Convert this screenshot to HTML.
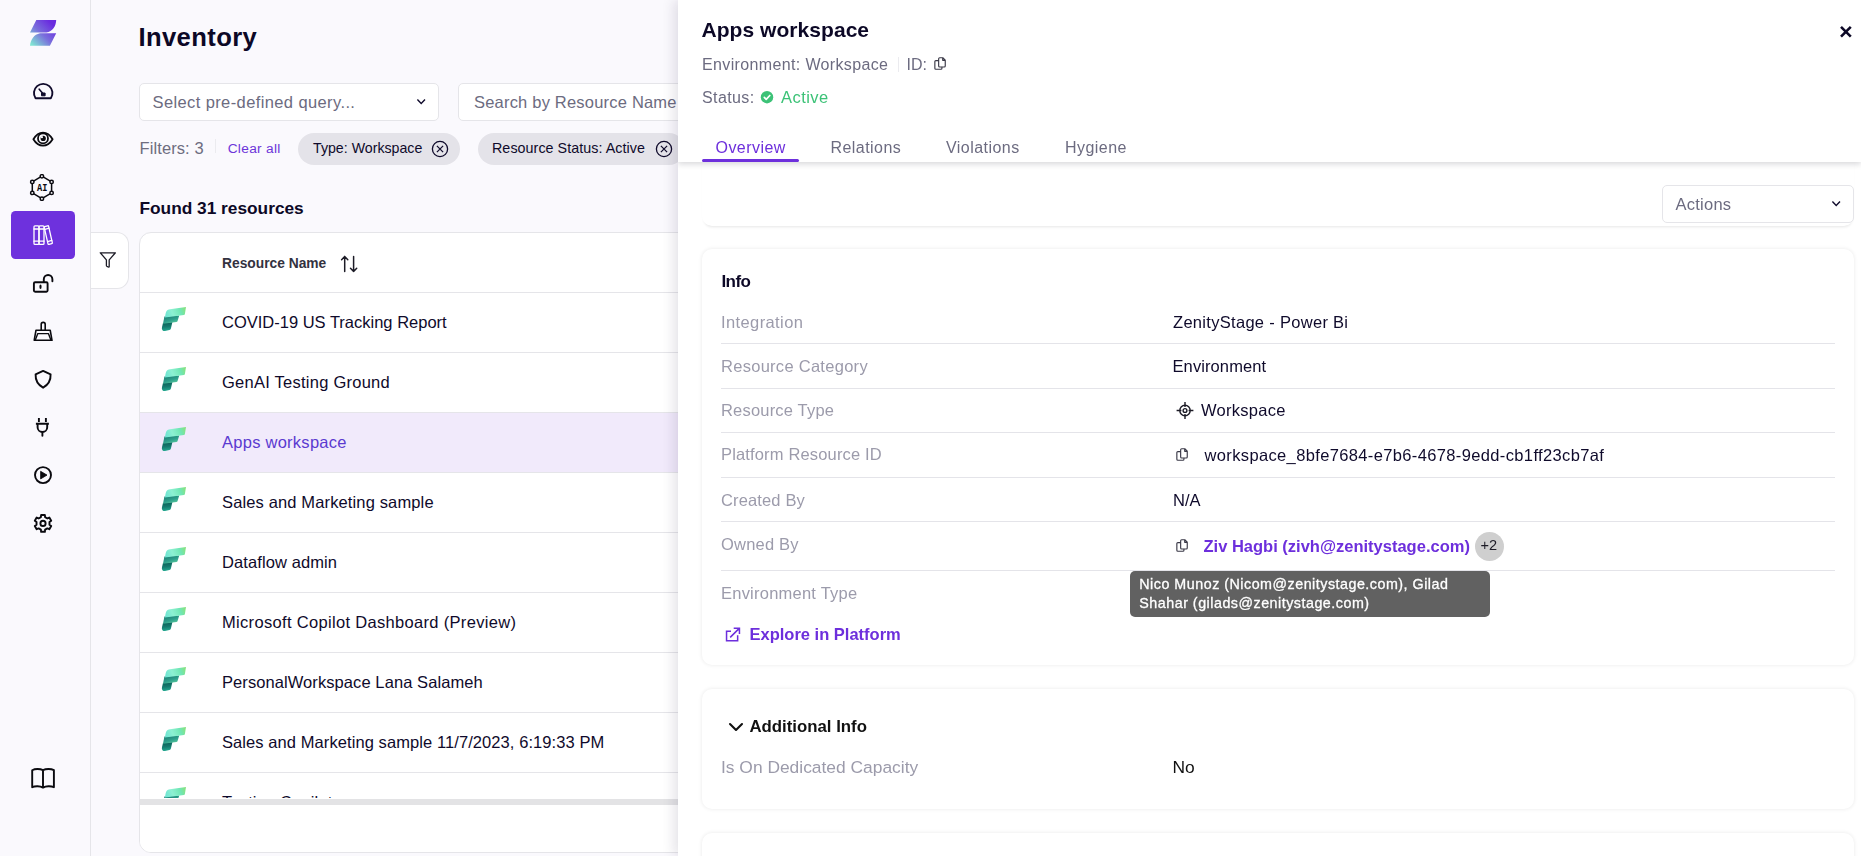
<!DOCTYPE html>
<html lang="en">
<head>
<meta charset="utf-8">
<title>Inventory</title>
<style>
*{box-sizing:border-box;margin:0;padding:0}
html,body{width:1861px;height:856px;overflow:hidden}
body{font-family:"Liberation Sans",sans-serif;background:#faf9fd;color:#0f0a2b;position:relative;font-size:16.5px}
.abs{position:absolute}
.t{position:absolute;white-space:nowrap;line-height:1}
svg{display:block}
/* sidebar */
#side{position:absolute;left:0;top:0;width:91px;height:856px;background:#faf9fd;border-right:1px solid #e5e5e9}
.ic{position:absolute;left:31px;width:24px;height:24px}
#active{position:absolute;left:11px;top:211px;width:64px;height:48px;background:#6e31dd;border-radius:4.5px}
/* main */
#main{position:absolute;left:91px;top:0;width:600px;height:856px;overflow:hidden}
#fbtn{position:absolute;left:91px;top:232px;width:38px;height:57px;background:#fff;border:1px solid #e5e5e9;border-left:none;border-radius:0 12px 12px 0}
.inp{position:absolute;height:38px;background:#fff;border:1px solid #e5e5e9;border-radius:5px}
.chip{position:absolute;top:133px;height:32px;background:#e4e3e9;border-radius:17px}
#tbl{position:absolute;left:139px;top:232px;width:700px;height:621px;background:#fff;border:1px solid #e5e5e9;border-radius:12px;overflow:hidden}
.row{position:absolute;left:0;width:700px;height:60px;border-top:1px solid #e5e5e9}
.row .nm{position:absolute;left:82px;top:21px;white-space:nowrap;line-height:1;font-size:16.5px;color:#0f0a2b}
.row svg{position:absolute;left:21px;top:13px}
.row.sel{background:#f1eafb}
.row.sel .nm{color:#5b3ad0}
/* panel */
#panel{will-change:transform;position:absolute;left:678px;top:0;width:1183px;height:856px;background:#fff;box-shadow:-4px 0 12px rgba(30,20,60,.12);overflow:hidden}
#phead{position:absolute;left:0;top:0;width:1183px;height:162px;background:#fff;box-shadow:0 2px 6px rgba(10,10,30,.17)}
.card{position:absolute;left:24px;width:1152px;background:#fff;border-radius:10px;box-shadow:0 0 4px rgba(0,0,0,.09)}
.lbl{position:absolute;left:43px;white-space:nowrap;line-height:1;font-size:16.5px;color:#9c9bab}
.val{position:absolute;left:495px;white-space:nowrap;line-height:1;font-size:16.5px;color:#0f0a2b}
.hr{position:absolute;left:43px;width:1114px;height:1px;background:#e4e4e9}
</style>
</head>
<body>
<svg width="0" height="0" style="position:absolute"><defs>
<linearGradient id="fg1" x1="0" y1="0.6" x2="1" y2="0.4"><stop offset="0" stop-color="#6fe5d2"/><stop offset="0.35" stop-color="#8df0d2"/><stop offset="0.75" stop-color="#6fe6b4"/><stop offset="1" stop-color="#86e283"/></linearGradient>
<linearGradient id="fg2" x1="0.1" y1="0" x2="0.7" y2="1"><stop offset="0" stop-color="#15776e"/><stop offset="0.6" stop-color="#2fa08c"/><stop offset="1" stop-color="#5ccf9f"/></linearGradient>
<linearGradient id="fg3" x1="0.4" y1="0" x2="0.5" y2="1"><stop offset="0" stop-color="#0b5f58"/><stop offset="0.5" stop-color="#147a6e"/><stop offset="1" stop-color="#25ab92"/></linearGradient>
<g id="fab">
<path d="M9 24C8.2 27.5 7.6 29 8 30.2C8.5 31.8 9.6 32.2 11 32L15.4 31C16.3 30.7 16.7 30.2 16.9 29.4L18.4 23Z" fill="url(#fg3)"/>
<path d="M10.4 17.4L25.2 16.4L23.6 22C23.4 22.6 23 22.9 22.4 23L9 24.7Z" fill="url(#fg2)"/>
<path d="M11 18.5C11.4 15 11.8 13.2 12.6 12C13.4 10.8 14.6 10.4 16 10.2L32 8L30.9 15C30.8 15.6 30.4 15.9 29.8 16Z" fill="url(#fg1)"/>
</g>
<g id="cpy" fill="none" stroke-width="1.15" stroke-linejoin="round" stroke-linecap="round"><path d="M6.65 1.75H9.8L12.25 4.2V9.95Q12.25 10.95 11.25 10.95H6.65Q5.65 10.95 5.65 9.95V2.75Q5.65 1.75 6.65 1.75ZM9.7 2V4.3H12"/><path d="M5.4 4.55H2.85Q1.85 4.55 1.85 5.55V12.25Q1.85 13.25 2.85 13.25H7.95Q8.95 13.25 8.95 12.25V11.2"/></g>
</defs></svg>
<!-- SIDEBAR -->
<div id="side">
  <svg class="abs" style="left:30px;top:20px" width="27" height="26" viewBox="0 0 27 26">
    <defs><linearGradient id="zg" x1="0.95" y1="0.05" x2="0.05" y2="0.95"><stop offset="0.12" stop-color="#6a2cdf"/><stop offset="0.55" stop-color="#7a6fdc"/><stop offset="1" stop-color="#80e6d3"/></linearGradient></defs>
    <path d="M6.3 0H26.2C26 6.5 22.5 11.5 16.4 12.6H0Z M10 13.2H26.2L19.9 25.8H0C0.6 19.5 4 14.4 10 13.2Z" fill="url(#zg)"/>
  </svg>
  <!-- gauge -->
  <svg class="abs" style="left:31px;top:79px" width="24" height="24" viewBox="0 0 24 24" fill="none" stroke="#0f0a2b" stroke-width="1.9" stroke-linejoin="round" stroke-linecap="round">
    <path d="M4.55 19.3A9.25 9.25 0 1 1 19.85 19.3Z"/><path d="M8.2 10.2L12.3 15" stroke-width="1.6"/><rect x="10.9" y="14" width="3.2" height="2.8" fill="#0f0a2b" stroke-width="1"/>
  </svg>
  <!-- eye -->
  <svg class="abs" style="left:31px;top:127px" width="24" height="24" viewBox="0 0 24 24" fill="none" stroke="#0a0a0f" stroke-width="1.8" stroke-linejoin="round">
    <path d="M2.4 12.3C5 7.8 8.4 5.6 12 5.6S19 7.8 21.6 12.3C19 16.6 15.6 18.7 12 18.7S5 16.6 2.4 12.3Z"/><circle cx="12" cy="11.4" r="5"/><circle cx="12.2" cy="11.4" r="2.6" fill="#0a0a0f" stroke="none"/><circle cx="10.9" cy="10.2" r="1.1" fill="#faf9fd" stroke="none"/>
  </svg>
  <!-- AI hex -->
  <svg class="abs" style="left:29px;top:174px" width="26" height="27" viewBox="0 0 26 27" fill="none" stroke="#0a0a0f" stroke-width="1.5">
    <path d="M12.9 2.2L22.6 7.9V18.9L12.9 24.7L3.3 18.9V7.9Z"/>
    <g fill="#faf9fd"><circle cx="12.9" cy="2.3" r="1.7"/><circle cx="22.6" cy="7.9" r="1.7"/><circle cx="22.6" cy="18.9" r="1.7"/><circle cx="12.9" cy="24.7" r="1.7"/><circle cx="3.3" cy="18.9" r="1.7"/><circle cx="3.3" cy="7.9" r="1.7"/></g>
    <text x="8" y="16.6" textLength="10.4" lengthAdjust="spacingAndGlyphs" font-family="Liberation Mono, monospace" font-weight="700" font-size="10" fill="#0a0a0f" stroke="none">AI</text>
  </svg>
  <div id="active"></div>
  <!-- books -->
  <svg class="abs" style="left:31px;top:223px" width="24" height="24" viewBox="0 0 24 24" fill="none" stroke="#fff" stroke-width="1.3" stroke-linejoin="round" stroke-linecap="round">
    <rect x="3" y="2.8" width="5" height="18.6" rx="1"/><rect x="8" y="2.8" width="5" height="18.6" rx="1"/><path d="M3 6H13M3 18.2H13"/>
    <path d="M13.6 3.6L16.6 2.8Q17.4 2.6 17.6 3.4L21.3 19.6Q21.5 20.4 20.7 20.6L18 21.4Q17.2 21.6 17 20.8L13.3 4.6Q13.1 3.8 13.6 3.6Z"/><path d="M14 6.3L18 5.2M16.7 18.6L20.8 17.4"/>
  </svg>
  <!-- unlock -->
  <svg class="abs" style="left:31px;top:271px" width="24" height="24" viewBox="0 0 24 24" fill="none" stroke="#0a0a0f" stroke-width="1.9" stroke-linejoin="round" stroke-linecap="round">
    <rect x="2.9" y="11.2" width="13.7" height="9.6" rx="1.2"/><path d="M12.8 11V8.3A4.3 4.3 0 0 1 21.4 8.3V10.3"/><ellipse cx="9.5" cy="15.7" rx="0.5" ry="1.6" stroke-width="1.2"/>
  </svg>
  <!-- dustpan -->
  <svg class="abs" style="left:31px;top:319px" width="24" height="24" viewBox="0 0 24 24" fill="none" stroke="#0a0a0f" stroke-width="1.6" stroke-linejoin="round" stroke-linecap="round">
    <path d="M10.2 11V5.4A2 2 0 0 1 14.2 5.4V11"/><path d="M5 11.2H19.2L21 21.3H3.2Z"/><path d="M4.4 20.8L6.8 14.6H17.4L19.8 20.8" stroke-width="1.4"/>
  </svg>
  <!-- shield -->
  <svg class="abs" style="left:31px;top:367px" width="24" height="24" viewBox="0 0 24 24" fill="none" stroke="#0a0a0f" stroke-width="1.9" stroke-linejoin="round">
    <path d="M12.1 3.9L19.6 7.3C19.9 13.3 17.2 17.8 12.1 20.7C7 17.8 4.3 13.3 4.6 7.3Z"/>
  </svg>
  <!-- plug -->
  <svg class="abs" style="left:31px;top:415px" width="24" height="24" viewBox="0 0 24 24" fill="none" stroke="#0a0a0f" stroke-width="1.9" stroke-linecap="butt">
    <path d="M7.9 3V6.9M14.9 3V6.9M4.9 8.8H17.9"/><path d="M6.6 9V12.2A4.8 4.8 0 0 0 16.2 12.2V9"/><path d="M11.4 17V20.7" stroke-linecap="round"/>
  </svg>
  <!-- play -->
  <svg class="abs" style="left:31px;top:463px" width="24" height="24" viewBox="0 0 24 24" fill="none" stroke="#0a0a0f" stroke-width="1.9">
    <circle cx="12" cy="12.1" r="8"/><path d="M9.6 8.3V15.9L16 12.1Z" fill="#0a0a0f" stroke-width="0.8" stroke-linejoin="round"/>
  </svg>
  <!-- gear -->
  <svg class="abs" style="left:31px;top:511px" width="24" height="24" viewBox="-12 -12.4 24 24" fill="none" stroke="#0a0a0f" stroke-width="1.9" stroke-linejoin="round">
    <path d="M-2.11 -6.26L-1.88 -8.39L1.88 -8.39L2.11 -6.26L4.36 -4.95L6.33 -5.82L8.21 -2.57L6.47 -1.30L6.47 1.30L8.21 2.57L6.33 5.82L4.36 4.95L2.11 6.26L1.88 8.39L-1.88 8.39L-2.11 6.26L-4.36 4.95L-6.33 5.82L-8.21 2.57L-6.47 1.30L-6.47 -1.30L-8.21 -2.57L-6.33 -5.82L-4.36 -4.95Z"/><circle cx="0" cy="0" r="2.6"/>
  </svg>
  <!-- book -->
  <svg class="abs" style="left:30px;top:766px" width="26" height="26" viewBox="0 0 26 26" fill="none" stroke="#0a0a0f" stroke-width="1.9" stroke-linejoin="round" stroke-linecap="round">
    <path d="M13 4.2C10 2.6 5 2.6 2.2 4.2V21.2C5 19.8 10 19.8 13 21.6C16 19.8 21 19.8 23.9 21.2V4.2C21 2.6 16 2.6 13 4.2ZM13 4.2V21.6"/>
  </svg>
</div>
<!-- MAIN -->
<div id="main">
  <div class="t" style="left:47.5px;top:25px;font-size:25.6px;font-weight:700;color:#0c0826;letter-spacing:0.38px">Inventory</div>
  <div class="inp" style="left:48px;top:83px;width:300px"><span class="t" style="left:12.5px;top:10px;font-size:16.5px;letter-spacing:0.39px;color:#6c6b80">Select pre-defined query...</span>
    <svg class="abs" style="left:274px;top:13px" width="14" height="12" viewBox="0 0 14 12" fill="none" stroke="#0f0a2b" stroke-width="1.4"><path d="M3.4 2.6L7.2 6.4L11 2.6"/></svg></div>
  <div class="inp" style="left:367px;top:83px;width:400px"><span class="t" style="left:15px;top:10px;font-size:16.5px;letter-spacing:0.2px;color:#6c6b80">Search by Resource Name</span></div>
  <div class="t" style="left:48.5px;top:140px;font-size:16.5px;color:#6e6d7f;letter-spacing:0.1px">Filters: 3</div>
  <div class="abs" style="left:124px;top:139px;width:1px;height:14px;background:#ebebef"></div>
  <div class="t" style="left:136.7px;top:141.5px;font-size:13.7px;color:#6d35d9;letter-spacing:0.3px">Clear all</div>
  <div class="chip" style="left:207px;width:162px"><span class="t" style="left:15px;top:8.4px;font-size:14.2px;color:#0f0a2b">Type: Workspace</span>
    <svg class="abs" style="left:132px;top:6px" width="20" height="20" viewBox="0 0 20 20" fill="none" stroke="#0f0a2b" stroke-width="1.3"><circle cx="10" cy="10" r="7.6"/><path d="M6.9 6.9L13.1 13.1M13.1 6.9L6.9 13.1" stroke-width="1.25"/></svg></div>
  <div class="chip" style="left:387px;width:207px"><span class="t" style="left:14px;top:8.4px;font-size:14.3px;color:#0f0a2b;letter-spacing:0.05px">Resource Status: Active</span>
    <svg class="abs" style="left:176px;top:6px" width="20" height="20" viewBox="0 0 20 20" fill="none" stroke="#0f0a2b" stroke-width="1.3"><circle cx="10" cy="10" r="7.6"/><path d="M6.9 6.9L13.1 13.1M13.1 6.9L6.9 13.1" stroke-width="1.25"/></svg></div>
  <div class="t" style="left:48.5px;top:199.5px;font-size:17.3px;font-weight:700;color:#0c0826;letter-spacing:0px">Found 31 resources</div>
  <div id="tbl" style="left:48px">
    <span class="t" style="left:82px;top:23.5px;font-size:13.8px;font-weight:700;color:#33323f">Resource Name</span>
    <svg class="abs" style="left:199px;top:21px" width="20" height="20" viewBox="0 0 20 20" fill="none" stroke="#1c1b26" stroke-width="1.5" stroke-linecap="round" stroke-linejoin="round"><path d="M5.7 17.6V2.6M2.6 5.8L5.7 2.6L8.8 5.8M14.6 2.4V17.4M11.5 14.2L14.6 17.4L17.7 14.2"/></svg>
    <div class="row" style="top:59px"><svg width="26" height="26" viewBox="7 7 26 26"><use href="#fab"/></svg><span class="nm">COVID-19 US Tracking Report</span></div>
<div class="row" style="top:119px"><svg width="26" height="26" viewBox="7 7 26 26"><use href="#fab"/></svg><span class="nm" style="letter-spacing:0.25px">GenAI Testing Ground</span></div>
<div class="row sel" style="top:179px"><svg width="26" height="26" viewBox="7 7 26 26"><use href="#fab"/></svg><span class="nm" style="letter-spacing:0.26px">Apps workspace</span></div>
<div class="row" style="top:239px"><svg width="26" height="26" viewBox="7 7 26 26"><use href="#fab"/></svg><span class="nm" style="letter-spacing:0.135px">Sales and Marketing sample</span></div>
<div class="row" style="top:299px"><svg width="26" height="26" viewBox="7 7 26 26"><use href="#fab"/></svg><span class="nm" style="letter-spacing:0.1px">Dataflow admin</span></div>
<div class="row" style="top:359px"><svg width="26" height="26" viewBox="7 7 26 26"><use href="#fab"/></svg><span class="nm" style="letter-spacing:0.32px">Microsoft Copilot Dashboard (Preview)</span></div>
<div class="row" style="top:419px"><svg width="26" height="26" viewBox="7 7 26 26"><use href="#fab"/></svg><span class="nm" style="letter-spacing:0.08px">PersonalWorkspace Lana Salameh</span></div>
<div class="row" style="top:479px"><svg width="26" height="26" viewBox="7 7 26 26"><use href="#fab"/></svg><span class="nm" style="letter-spacing:0.08px">Sales and Marketing sample 11/7/2023, 6:19:33 PM</span></div>
<div class="row" style="top:539px"><svg width="26" height="26" viewBox="7 7 26 26"><use href="#fab"/></svg><span class="nm" style="letter-spacing:0.15px">Testing Copilot</span></div>

    <div class="abs" style="left:0;top:565px;width:700px;height:56px;background:#fff"></div>
    <div class="abs" style="left:0;top:566px;width:700px;height:6px;background:#e3e3e5"></div>
  </div>
</div>
<div id="fbtn"><svg class="abs" style="left:7px;top:17.2px" width="20" height="20" viewBox="0 0 20 20" fill="none" stroke="#1c1b26" stroke-width="1.3" stroke-linejoin="round"><path d="M2.3 2.8H17.4L11.2 9.9V16.4Q11.2 17.4 10.3 17L8.9 16.3Q8.4 16 8.4 15.4V9.9Z"/></svg></div>
<!-- PANEL -->
<div id="panel">
  <!-- actions card -->
  <div class="card" style="top:150px;height:76px;box-shadow:0 3px 3px -2px rgba(0,0,0,.10)"></div>
  <div class="inp" style="left:984px;top:185px;width:192px;border-color:#e5e5e9"><span class="t" style="left:12.5px;top:9.5px;font-size:16.5px;color:#6c6b80;letter-spacing:0.25px">Actions</span>
    <svg class="abs" style="left:166px;top:13px" width="14" height="12" viewBox="0 0 14 12" fill="none" stroke="#0f0a2b" stroke-width="1.4"><path d="M3.4 2.6L7.2 6.4L11 2.6"/></svg></div>
  <!-- info card -->
  <div class="card" style="top:249px;height:416px">
    <span class="t" style="left:19.5px;top:23.5px;font-size:17px;font-weight:700;color:#0c0826;letter-spacing:-0.6px">Info</span>
  </div>
  <!-- additional info card -->
  <div class="card" style="top:689px;height:120px"></div>
  <div class="card" style="top:833px;height:120px"></div>

  <span class="lbl" style="top:313.5px;letter-spacing:0.39px">Integration</span><span class="val" style="top:313.5px;letter-spacing:0.3px">ZenityStage - Power Bi</span>
  <div class="hr" style="top:343px"></div>
  <span class="lbl" style="top:357.5px;letter-spacing:0.28px">Resource Category</span><span class="val" style="left:494.5px;top:357.5px;letter-spacing:0.1px">Environment</span>
  <div class="hr" style="top:388px"></div>
  <span class="lbl" style="top:401.5px;letter-spacing:0.19px">Resource Type</span>
  <svg class="abs" style="left:497px;top:400.6px" width="20" height="20" viewBox="0 0 20 20" fill="none" stroke="#1c1b26" stroke-width="1.4"><circle cx="10" cy="9.5" r="5.2"/><circle cx="10" cy="9.5" r="1.9"/><path d="M10 1.1V5.9M10 13.1V17.9M1.6 9.5H6.4M13.6 9.5H18.4"/></svg>
  <span class="val" style="left:523px;top:401.5px;letter-spacing:0.27px">Workspace</span>
  <div class="hr" style="top:432px"></div>
  <span class="lbl" style="top:445.5px;letter-spacing:0.155px">Platform Resource ID</span>
  <svg class="abs" style="left:497px;top:447px" width="14" height="16" viewBox="0 0 14 16" stroke="#3a3947"><use href="#cpy"/></svg>
  <span class="val" style="left:526.5px;top:446.5px;letter-spacing:0.36px">workspace_8bfe7684-e7b6-4678-9edd-cb1ff23cb7af</span>
  <div class="hr" style="top:477px"></div>
  <span class="lbl" style="top:491.5px;letter-spacing:0.14px">Created By</span><span class="val" style="top:491.5px">N/A</span>
  <div class="hr" style="top:521px"></div>
  <span class="lbl" style="top:535.5px;letter-spacing:0.2px">Owned By</span>
  <svg class="abs" style="left:497px;top:538px" width="14" height="16" viewBox="0 0 14 16" stroke="#3a3947"><use href="#cpy"/></svg>
  <span class="val" style="left:525.5px;top:537.5px;font-weight:700;color:#6d2fdc;letter-spacing:0px">Ziv Hagbi (zivh@zenitystage.com)</span>
  <div class="abs" style="left:797px;top:532px;width:29px;height:29px;border-radius:50%;background:#cfcfcf"></div>
  <span class="t" style="left:803px;top:538.3px;font-size:14.6px;color:#1c1b26;margin-left:-0.5px">+2</span>
  <div class="hr" style="top:570px"></div>
  <span class="lbl" style="top:584.5px;letter-spacing:0.23px">Environment Type</span>
  <svg class="abs" style="left:45px;top:625px" width="19" height="19" viewBox="0 0 19 19" fill="none" stroke="#6d2fdc" stroke-width="1.5" stroke-linecap="butt" stroke-linejoin="miter"><path d="M8 6.25H3.55V15.85H14.65V10.3M10.7 3.15H16.45V8.9M16.2 3.4L7.2 12.4"/></svg>
  <span class="t" style="left:71.5px;top:625.5px;font-size:16.5px;font-weight:700;color:#6d2fdc;letter-spacing:0px">Explore in Platform</span>

  <svg class="abs" style="left:48px;top:717px" width="20" height="20" viewBox="0 0 20 20" fill="none" stroke="#111" stroke-width="2.1" stroke-linecap="round" stroke-linejoin="round"><path d="M4 7L10 13L16 7"/></svg>
  <span class="t" style="left:71.5px;top:719px;font-size:16.8px;font-weight:700;color:#111">Additional Info</span>
  <span class="t" style="left:43px;top:759px;font-size:17.4px;color:#9c9bab">Is On Dedicated Capacity</span>
  <span class="t" style="left:494.5px;top:759px;font-size:17.4px;color:#111">No</span>

  <!-- tooltip -->
  <div class="abs" style="left:452px;top:570.6px;width:360px;height:46.2px;border-radius:5px;background:#616161;color:#fff;font-size:14.3px;letter-spacing:0.5px;-webkit-text-stroke:0.3px #fff;line-height:18.9px;padding:3.8px 0 0 9.3px;white-space:nowrap;will-change:transform">Nico Munoz (Nicom@zenitystage.com), Gilad<br>Shahar (gilads@zenitystage.com)</div>

  <!-- header -->
  <div id="phead">
    <span class="t" style="left:23.5px;top:18.8px;font-size:21px;font-weight:700;color:#0c0826;letter-spacing:0.05px">Apps workspace</span>
    <span class="t" style="left:24px;top:57px;font-size:16px;color:#6c6b80;letter-spacing:0.36px">Environment: Workspace</span>
    <div class="abs" style="left:219.5px;top:57px;width:1px;height:15px;background:#ebebef"></div>
    <span class="t" style="left:228.5px;top:57px;font-size:16px;color:#6c6b80;letter-spacing:0px">ID:</span>
    <svg class="abs" style="left:255px;top:56px" width="14" height="16" viewBox="0 0 14 16" stroke="#3a3947"><use href="#cpy"/></svg>
    <span class="t" style="left:24px;top:90px;font-size:16px;color:#6c6b80;letter-spacing:0.38px">Status:</span>
    <svg class="abs" style="left:82px;top:90px" width="14" height="14" viewBox="0 0 14 14"><circle cx="7" cy="7.2" r="6.2" fill="#3cc277"/><path d="M4.3 7.4L6.2 9.3L9.8 5.5" fill="none" stroke="#fff" stroke-width="1.7" stroke-linecap="round" stroke-linejoin="round"/></svg>
    <span class="t" style="left:103px;top:89px;font-size:16.5px;color:#3cc277;letter-spacing:0.45px">Active</span>
    <span class="t" style="left:37.5px;top:139.7px;font-size:16px;color:#6d2fdc;letter-spacing:0.45px">Overview</span>
    <div class="abs" style="left:24px;top:158.5px;width:97px;height:3px;border-radius:2px;background:#6d2fdc"></div>
    <span class="t" style="left:152.5px;top:139.7px;font-size:16px;color:#6c6b80;letter-spacing:0.45px">Relations</span>
    <span class="t" style="left:268px;top:139.7px;font-size:16px;color:#6c6b80;letter-spacing:0.45px">Violations</span>
    <span class="t" style="left:387px;top:139.7px;font-size:16px;color:#6c6b80;letter-spacing:0.45px">Hygiene</span>
    <svg class="abs" style="left:1160px;top:24px" width="16" height="16" viewBox="0 0 16 16" fill="none" stroke="#0c0826" stroke-width="2.6"><path d="M3 2.8L12.8 12.6M12.8 2.8L3 12.6"/></svg>
  </div>
</div>
</body>
</html>
